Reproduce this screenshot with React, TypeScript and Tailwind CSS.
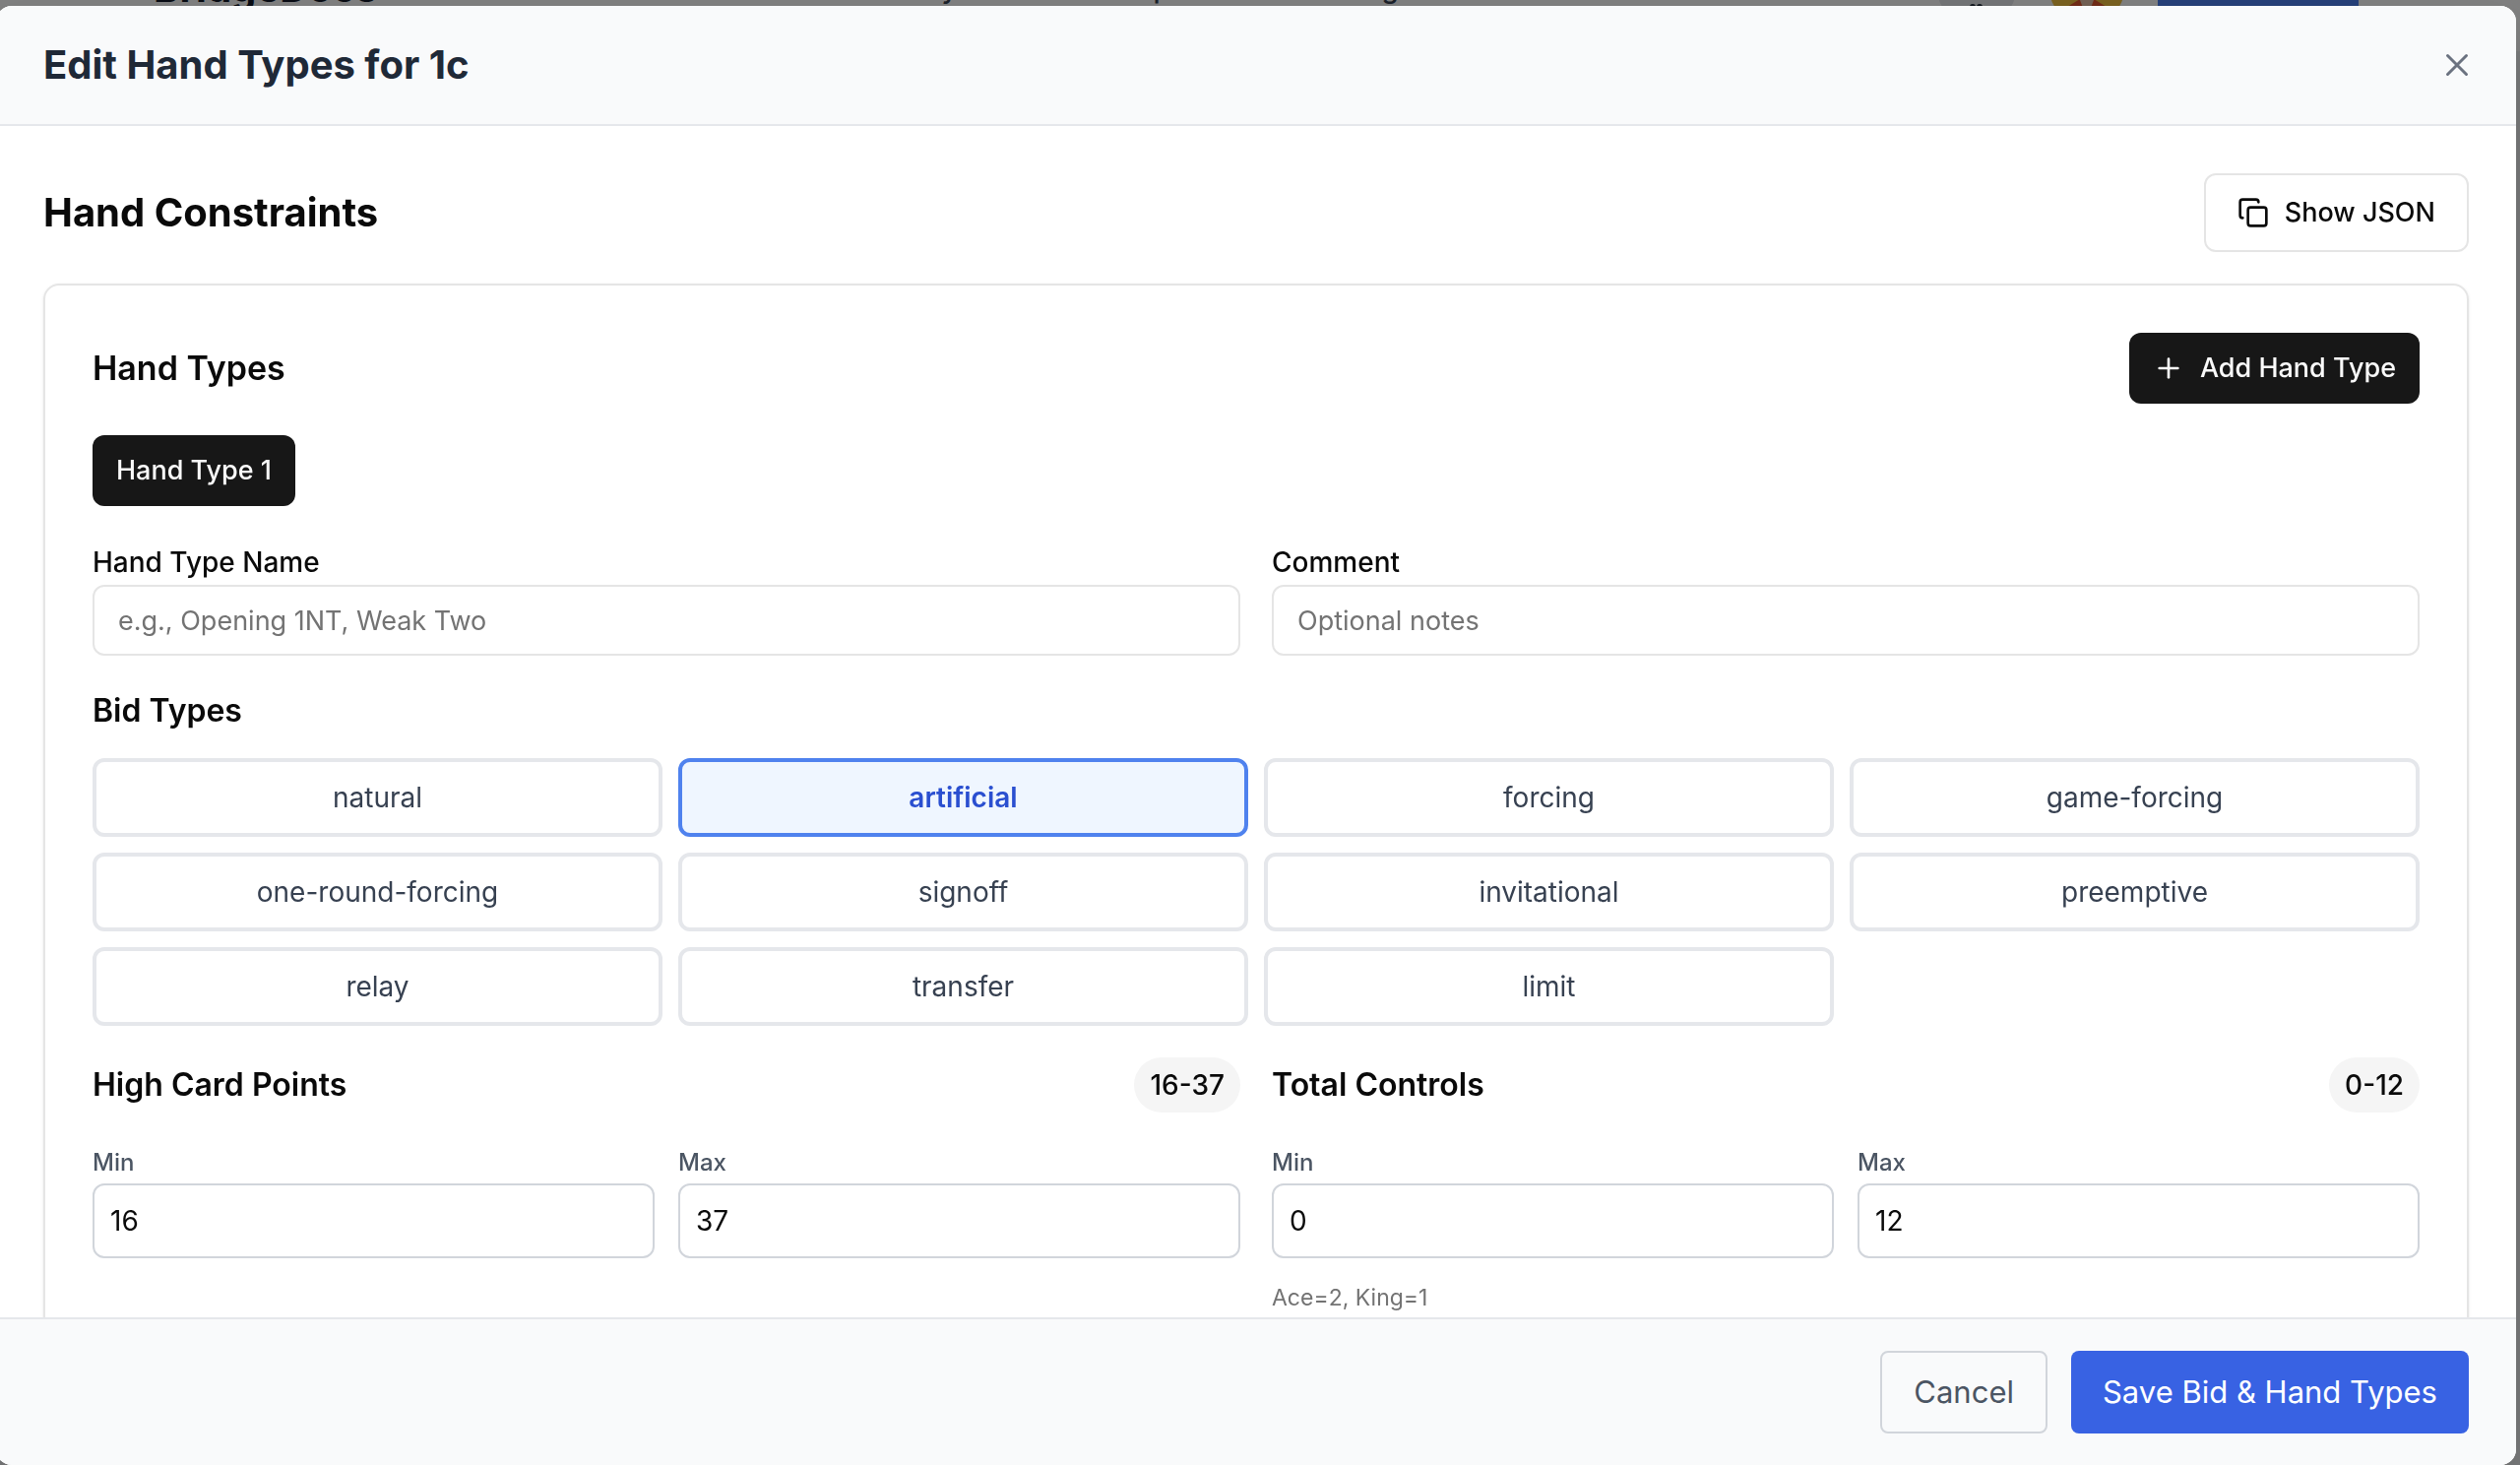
import { useState } from "react";
import { Copy, Plus } from "lucide-react";
import clsx from "clsx";

const BID_TYPES = [
  "natural",
  "artificial",
  "forcing",
  "game-forcing",
  "one-round-forcing",
  "signoff",
  "invitational",
  "preemptive",
  "relay",
  "transfer",
  "limit",
];

const SiteHeader = () => (
  <div className="flex h-[52px] flex-col justify-end overflow-hidden bg-white">
    <header className="flex h-32 shrink-0 items-center justify-between pr-[164px] pl-[156px]">
      <a href="#" className="text-[40px] font-bold text-[#111827]">
        BridgeDocs
      </a>
      <nav className="flex gap-20 text-[28px] font-medium text-[#374151]">
        <a href="#">My Notes</a>
        <a href="#">Explore</a>
        <a href="#">Bidding</a>
      </nav>
      <div className="flex items-center gap-[34px]">
        <svg viewBox="0 0 80 80" className="size-20" aria-hidden="true">
          <circle cx="40" cy="40" r="40" fill="#e5e7eb" />
          <circle cx="36" cy="59" r="3" fill="#1f2937" />
          <circle cx="43" cy="59" r="3" fill="#1f2937" />
        </svg>
        <svg viewBox="0 0 76 76" className="size-[76px]" aria-hidden="true">
          <circle cx="38" cy="38" r="38" fill="#f0c040" />
          <path d="M18 57 L31 49 L45 49 L58 57 Z" fill="#e0552e" />
          <path d="M31 44 H45 V50 L42 58 H34 L31 50 Z" fill="#e3bfa6" />
        </svg>
        <button
          type="button"
          aria-label="Account"
          className="h-20 w-[204px] rounded-lg bg-[#4c80f0]"
        />
      </div>
    </header>
  </div>
);

interface ITextFieldProps {
  id: string;
  label: string;
  placeholder: string;
}

const TextField: React.FC<ITextFieldProps> = ({ id, label, placeholder }) => (
  <div>
    <div className="text-[32px] leading-[48px]">
      <label htmlFor={id} className="text-[28px] leading-8 font-medium">
        {label}
      </label>
    </div>
    <input
      id={id}
      type="text"
      placeholder={placeholder}
      className="block h-[72px] w-full rounded-xl border-2 border-[#e5e5e5] px-6 text-[27px] placeholder:text-[#737373]"
    />
  </div>
);

interface INumberFieldProps {
  id: string;
  label: string;
  value: number;
}

const NumberField: React.FC<INumberFieldProps> = ({ id, label, value }) => (
  <div>
    <div className="text-[32px] leading-[48px]">
      <label htmlFor={id} className="text-2xl leading-8 font-medium text-[#4b5563]">
        {label}
      </label>
    </div>
    <input
      id={id}
      type="text"
      inputMode="numeric"
      defaultValue={value}
      className="block h-[76px] w-full rounded-xl border-2 border-[#d1d5db] px-4 text-[28px]"
    />
  </div>
);

interface IRangeProps {
  id: string;
  title: string;
  min: number;
  max: number;
  hint?: string;
}

const Range: React.FC<IRangeProps> = ({ id, title, min, max, hint }) => (
  <section className="flex flex-col gap-6">
    <div className="flex items-center justify-between">
      <h4 className="text-[32px] leading-[48px] font-semibold">{title}</h4>
      <span className="rounded-full bg-[#f5f5f5] px-4 py-2 text-[28px] leading-10 font-medium">
        {min}-{max}
      </span>
    </div>
    <div className="grid grid-cols-2 gap-6">
      <NumberField id={`${id}-min`} label="Min" value={min} />
      <NumberField id={`${id}-max`} label="Max" value={max} />
    </div>
    {hint && <p className="text-[23px] leading-8 text-[#737373]">{hint}</p>}
  </section>
);

export default function App() {
  const [selected, setSelected] = useState<string[]>(["artificial"]);

  const toggle = (type: string) =>
    setSelected((prev) => (prev.includes(type) ? prev.filter((t) => t !== type) : [...prev, type]));

  return (
    <div className="h-screen overflow-hidden bg-[#f3f4f6] font-['Inter','Liberation_Sans',sans-serif] text-[#0a0a0a]">
      <SiteHeader />

      <div className="fixed inset-0 flex bg-black/50 pt-1.5">
        <div
          role="dialog"
          aria-labelledby="dialog-title"
          className="mr-1 -ml-1 flex flex-1 flex-col overflow-hidden rounded-2xl bg-white shadow-2xl"
        >
          <div className="flex items-center justify-between border-b-2 border-[#e5e7eb] bg-[#f9fafb] px-12 py-8">
            <h2 id="dialog-title" className="text-[40px] leading-[56px] font-bold text-[#1f2937]">
              Edit Hand Types for 1c
            </h2>
            <button type="button" aria-label="Close" className="text-[#6b7280]">
              <svg viewBox="0 0 24 24" className="size-6" fill="none" stroke="currentColor" strokeWidth="3" strokeLinecap="round">
                <path d="M2.5 2.5 21.5 21.5M21.5 2.5 2.5 21.5" />
              </svg>
            </button>
          </div>

          <div className="min-h-0 flex-1 overflow-y-auto p-12 [scrollbar-width:none]">
            <div className="mb-8 flex items-center justify-between">
              <h3 className="text-[40px] leading-[56px] font-bold">Hand Constraints</h3>
              <button
                type="button"
                className="flex h-20 items-center gap-4 rounded-xl border-2 border-[#e5e5e5] px-8 text-[27px] font-medium"
              >
                <Copy size={32} />
                Show JSON
              </button>
            </div>

            <div className="flex flex-col gap-8 rounded-2xl border-2 border-[#e5e5e5] p-12 shadow-sm">
              <div className="flex items-center justify-between">
                <h3 className="text-[34px] leading-10 font-semibold">Hand Types</h3>
                <button
                  type="button"
                  className="flex h-[72px] items-center gap-4 rounded-xl bg-[#171717] px-6 text-[27px] font-medium text-[#fafafa]"
                >
                  <Plus size={32} />
                  Add Hand Type
                </button>
              </div>

              <div className="flex gap-4">
                <button
                  type="button"
                  className="h-[72px] rounded-xl bg-[#171717] px-6 text-[27px] font-medium text-[#fafafa]"
                >
                  Hand Type 1
                </button>
              </div>

              <div className="grid grid-cols-2 gap-8">
                <TextField id="hand-type-name" label="Hand Type Name" placeholder="e.g., Opening 1NT, Weak Two" />
                <TextField id="comment" label="Comment" placeholder="Optional notes" />
              </div>

              <div>
                <h4 className="mb-6 text-[32px] leading-[48px] font-semibold">Bid Types</h4>
                <div className="grid grid-cols-4 gap-4">
                  {BID_TYPES.map((type) => (
                    <button
                      key={type}
                      type="button"
                      aria-pressed={selected.includes(type)}
                      onClick={() => toggle(type)}
                      className={clsx(
                        "h-20 rounded-xl border-4 text-[28px]",
                        selected.includes(type)
                          ? "border-[#4f82ee] bg-[#eff6ff] font-semibold text-[#2a4fd0]"
                          : "border-[#e5e7eb] bg-white text-[#374151]"
                      )}
                    >
                      {type}
                    </button>
                  ))}
                </div>
              </div>

              <div className="grid grid-cols-2 gap-8">
                <Range id="hcp" title="High Card Points" min={16} max={37} />
                <Range id="controls" title="Total Controls" min={0} max={12} hint="Ace=2, King=1" />
              </div>
            </div>
          </div>

          <div className="flex justify-end gap-6 border-t-2 border-[#e5e7eb] bg-[#f9fafb] px-12 py-8">
            <button
              type="button"
              className="h-[84px] rounded-lg border-2 border-[#d1d5db] px-8 text-[31px] text-[#4b5563]"
            >
              Cancel
            </button>
            <button type="button" className="h-[84px] rounded-lg bg-[#3862e3] px-8 text-[31px] text-white">
              Save Bid &amp; Hand Types
            </button>
          </div>
        </div>
      </div>
    </div>
  );
}
